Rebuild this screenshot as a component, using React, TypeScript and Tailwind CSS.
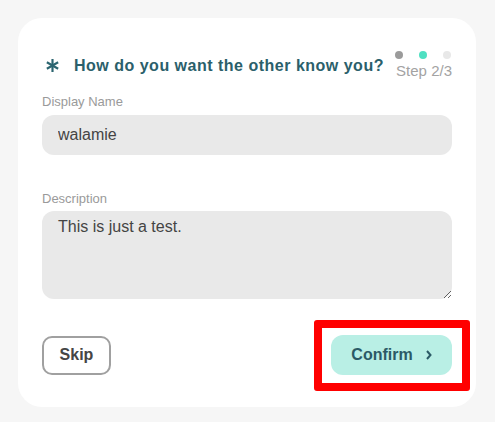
import React, { useEffect, useRef } from "react";

function StepDots({ current, total }: { current: number; total: number }) {
  return (
    <div className="flex flex-col items-end">
      <div className="flex items-center gap-[16px] pr-[1px] pt-[1px]">
        {Array.from({ length: total }).map((_, i) => (
          <span
            key={i}
            className={
              i + 1 === current
                ? "w-[8px] h-[8px] rounded-full bg-[#4fe0c2]"
                : i + 1 < current
                ? "w-[8px] h-[8px] rounded-full bg-[#9b9b9b]"
                : "w-[8px] h-[8px] rounded-full bg-[#e8e8e8]"
            }
          />
        ))}
      </div>
      <span className="text-[15px] leading-[20px] mt-[2px] text-[#a3a3a3]">
        Step {current}/{total}
      </span>
    </div>
  );
}

export default function App() {
  const areaRef = useRef<HTMLTextAreaElement>(null);

  useEffect(() => {
    const el = areaRef.current;
    if (el) {
      el.focus();
      el.setSelectionRange(el.value.length, el.value.length);
    }
  }, []);

  return (
    <div className="min-h-[422px] bg-[#f6f6f6] pt-[18px] px-[18px] font-['Liberation_Sans',Arial,sans-serif]">
      <div className="w-[458px] bg-white rounded-[24px] pt-[32px] pb-[32px] px-[24px]">
        <div className="flex items-center justify-between h-[30px]">
          <div className="flex items-center gap-[15px] pl-[4px]">
            <svg
              width="13"
              height="13"
              viewBox="0 0 24 24"
              fill="none"
              stroke="#2b6570"
              strokeWidth="4"
              strokeLinecap="butt"
            >
              <path d="M12 0v24" />
              <path d="M1.6 6l20.8 12" />
              <path d="M1.6 18l20.8-12" />
            </svg>
            <h1 className="text-[16px] font-bold text-[#2b5f6b] tracking-[0.5px] mt-[2px]">
              How do you want the other know you?
            </h1>
          </div>
          <StepDots current={2} total={3} />
        </div>

        <label
          htmlFor="displayName"
          className="block mt-[14px] mb-[5px] text-[13px] leading-[16px] text-[#9a9a9a]"
        >
          Display Name
        </label>
        <input
          id="displayName"
          defaultValue="walamie"
          className="w-full h-[40px] rounded-[12px] bg-[#e9e9e9] px-[16px] text-[16px] text-[#444] outline-none"
        />

        <label
          htmlFor="description"
          className="block mt-[36px] mb-[4px] text-[13px] leading-[16px] text-[#9a9a9a]"
        >
          Description
        </label>
        <textarea
          id="description"
          ref={areaRef}
          defaultValue="This is just a test."
          className="block w-full h-[88px] rounded-[12px] bg-[#e9e9e9] px-[16px] pt-[4px] text-[16px] leading-[24px] text-[#444] outline-none caret-[#222]"
        />

        <div className="flex items-center justify-between mt-[36px]">
          <button className="h-[39px] w-[69px] rounded-[10px] border-2 border-[#a0a0a0] text-[16px] font-bold text-[#454545]">
            Skip
          </button>
          <div className="relative">
            <button className="h-[40px] w-[121px] rounded-[12px] bg-[#b9efe5] text-[16px] font-bold text-[#2b5a66] flex items-center justify-center gap-[13px]">
              <span>Confirm</span>
              <svg width="6" height="10" viewBox="0 0 6 10" fill="none">
                <path d="M1 1l3.5 4L1 9" stroke="#2b5a66" strokeWidth="2" />
              </svg>
            </button>
            <span className="absolute -left-[17px] -right-[18px] -top-[15px] -bottom-[16px] border-[8px] border-[#ff0000] rounded-[3px] pointer-events-none" />
          </div>
        </div>
      </div>
    </div>
  );
}
